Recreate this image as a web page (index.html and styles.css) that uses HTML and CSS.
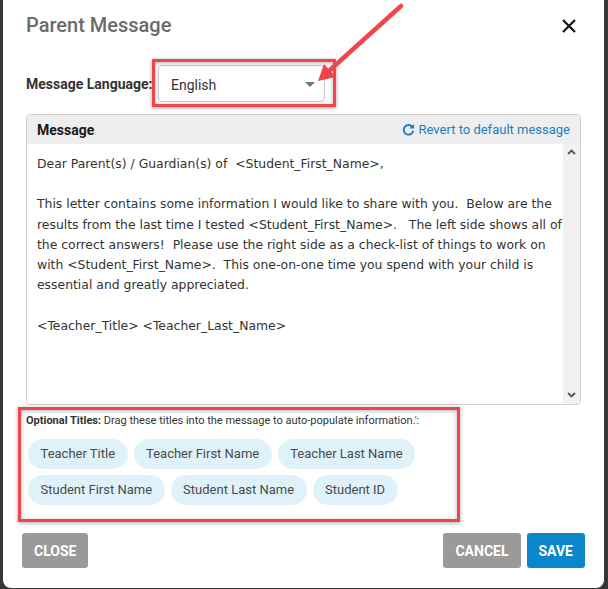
FILE: index.html
```html
<!DOCTYPE html>
<html lang="en">
<head>
    <meta charset="UTF-8">
    <meta name="viewport" content="width=device-width, initial-scale=1.0">
    <title>Parent Message</title>
    <link rel="stylesheet" href="styles.css">
</head>
<body>

    <div class="modal">
        <!-- header -->
        <div class="modal-header">
            <h2 class="modal-title">Parent Message</h2>
            <button class="close-x" aria-label="Close">
                <svg width="14" height="14" viewBox="0 0 14 14"><path d="M1 1L13 13M13 1L1 13" stroke="#111" stroke-width="2.2" fill="none"/></svg>
            </button>
        </div>

        <!-- language -->
        <div class="lang-row">
            <label class="lang-label">Message Language:</label>
            <div class="select-box">
                <span>English</span>
                <span class="caret"></span>
            </div>
        </div>

        <!-- message panel -->
        <div class="msg-panel">
            <div class="msg-head">
                <span class="msg-title">Message</span>
                <a class="revert-link" href="#">
                    <svg width="13" height="13" viewBox="0 0 14 14"><path d="M11.2 4.2A5.2 5.2 0 1 0 12.2 8.2" stroke="#1d7dc2" stroke-width="2" fill="none"/><path d="M13 1V6H8Z" fill="#1d7dc2"/></svg>
                    Revert to default message
                </a>
            </div>
            <div class="msg-body">
                <div class="msg-text">Dear Parent(s) / Guardian(s) of  &lt;Student_First_Name&gt;,

This letter contains some information I would like to share with you.  Below are the
results from the last time I tested &lt;Student_First_Name&gt;.   The left side shows all of
the correct answers!  Please use the right side as a check-list of things to work on
with &lt;Student_First_Name&gt;.  This one-on-one time you spend with your child is
essential and greatly appreciated.

&lt;Teacher_Title&gt; &lt;Teacher_Last_Name&gt;</div>
                <div class="scrollbar">
                    <svg width="9" height="6" viewBox="0 0 9 6"><path d="M1 5L4.5 1.5L8 5" stroke="#555" stroke-width="1.8" fill="none"/></svg>
                    <svg width="9" height="6" viewBox="0 0 9 6"><path d="M1 1L4.5 4.5L8 1" stroke="#555" stroke-width="1.8" fill="none"/></svg>
                </div>
            </div>
        </div>

        <!-- optional titles -->
        <div class="titles">
            <p class="titles-note"><b>Optional Titles:</b> Drag these titles into the message to auto-populate information.':</p>
            <div class="chips">
                <span class="chip">Teacher Title</span>
                <span class="chip">Teacher First Name</span>
                <span class="chip">Teacher Last Name</span>
                <span class="chip">Student First Name</span>
                <span class="chip">Student Last Name</span>
                <span class="chip">Student ID</span>
            </div>
        </div>

        <!-- footer -->
        <div class="modal-footer">
            <button class="btn btn-grey">CLOSE</button>
            <div class="btn-group">
                <button class="btn btn-grey">CANCEL</button>
                <button class="btn btn-blue">SAVE</button>
            </div>
        </div>
    </div>

    <!-- annotations over the screenshot -->
    <div class="mark mark-select"></div>
    <div class="mark mark-titles"></div>
    <svg class="arrow" width="608" height="589" viewBox="0 0 608 589">
        <line x1="401" y1="6" x2="330" y2="70" stroke="#f0454b" stroke-width="4.5" stroke-linecap="round"/>
        <polygon points="318,81 324,64 336,77" fill="#f0454b"/>
    </svg>

</body>
</html>
```

FILE: styles.css
```css
body {
    margin: 0;
    background-color: #363636;
    font-family: Roboto, Arial, sans-serif;
    height: 589px;
    overflow: hidden;
    position: relative;
}

.modal {
    margin-left: 3px;
    width: 601px;
    height: 588px;
    box-sizing: border-box;
    padding: 0 23px;
    background-color: #fff;
    border-radius: 0 0 8px 8px;
    display: flex;
    flex-direction: column;
}

.modal > * {
    flex-shrink: 0;
}

.modal-header {
    height: 50px;
    box-sizing: border-box;
    padding-top: 13px;
    display: flex;
    justify-content: space-between;
    align-items: flex-start;
}

.modal-title {
    margin: 0;
    font-size: 20px;
    line-height: 24px;
    font-weight: 500;
    color: #6b6b6b;
}

.close-x {
    border: none;
    background: none;
    padding: 0;
    margin: 6px 5px 0 0;
    line-height: 0;
    cursor: pointer;
}

.lang-row {
    margin-top: 15px;
    display: flex;
    align-items: center;
}

.lang-label {
    font-size: 14px;
    font-weight: bold;
    color: #333;
    width: 132px;
}

.select-box {
    width: 167px;
    height: 37px;
    box-sizing: border-box;
    border: 1px solid #c8c8c8;
    border-radius: 4px;
    padding: 2px 8px 0 12px;
    display: flex;
    align-items: center;
    justify-content: space-between;
    font-size: 14px;
    color: #333;
}

.caret {
    width: 0;
    height: 0;
    border-left: 5px solid transparent;
    border-right: 5px solid transparent;
    border-top: 5px solid #777;
    margin-right: 1px;
}

.msg-panel {
    margin-top: 12px;
    height: 291px;
    box-sizing: border-box;
    border: 1px solid #cfcfcf;
    border-radius: 4px;
    display: flex;
    flex-direction: column;
    overflow: hidden;
}

.msg-head {
    height: 29px;
    flex-shrink: 0;
    background-color: #eee;
    display: flex;
    align-items: center;
    justify-content: space-between;
    padding: 0 10px;
}

.msg-title {
    font-size: 14px;
    font-weight: bold;
    color: #1a1a1a;
}

.revert-link {
    font-size: 13px;
    color: #1d7dc2;
    text-decoration: none;
    display: flex;
    align-items: center;
    gap: 4px;
}

.msg-body {
    flex: 1;
    display: flex;
    background-color: #fff;
}

.msg-text {
    flex: 1;
    min-width: 0;
    overflow: hidden;
    padding: 10px 0 0 10px;
    font-family: "DejaVu Sans", Verdana, sans-serif;
    font-size: 12.4px;
    line-height: 20.2px;
    color: #333;
    white-space: pre;
}

.scrollbar {
    width: 17px;
    flex-shrink: 0;
    background-color: #f1f1f1;
    display: flex;
    flex-direction: column;
    justify-content: space-between;
    align-items: center;
    padding: 5px 0 6px;
}

.titles {
    margin-top: 8px;
}

.titles-note {
    margin: 0;
    font-size: 11px;
    line-height: 16px;
    color: #333;
}

.chips {
    margin-top: 10px;
    display: flex;
    flex-wrap: wrap;
    gap: 6px;
    width: 400px;
    padding-left: 2px;
}

.chip {
    height: 30px;
    line-height: 30px;
    padding: 0 12.5px;
    border-radius: 15px;
    background-color: #dff2fa;
    color: #4a4a4a;
    font-size: 13px;
}

.modal-footer {
    margin: 28px -4px 0 -4px;
    display: flex;
    justify-content: space-between;
}

.btn-group {
    display: flex;
    gap: 6px;
}

.btn {
    height: 35px;
    border: none;
    border-radius: 3px;
    padding: 0 12px;
    font-family: Roboto, Arial, sans-serif;
    font-size: 14px;
    font-weight: bold;
    color: #fff;
    cursor: pointer;
}

.btn-grey {
    background-color: #9a9a9a;
}

.btn-blue {
    background-color: #0a86cc;
}

/* annotation overlays */
.mark {
    position: absolute;
    border: 3px solid #f0454b;
    box-shadow: 0 1px 4px rgba(0, 0, 0, 0.35), inset 0 1px 4px rgba(0, 0, 0, 0.3);
    box-sizing: border-box;
}

.mark-select {
    left: 152px;
    top: 59px;
    width: 184px;
    height: 48px;
}

.mark-titles {
    left: 18px;
    top: 407px;
    width: 442px;
    height: 115px;
}

.arrow {
    position: absolute;
    left: 0;
    top: 0;
    pointer-events: none;
}
```
